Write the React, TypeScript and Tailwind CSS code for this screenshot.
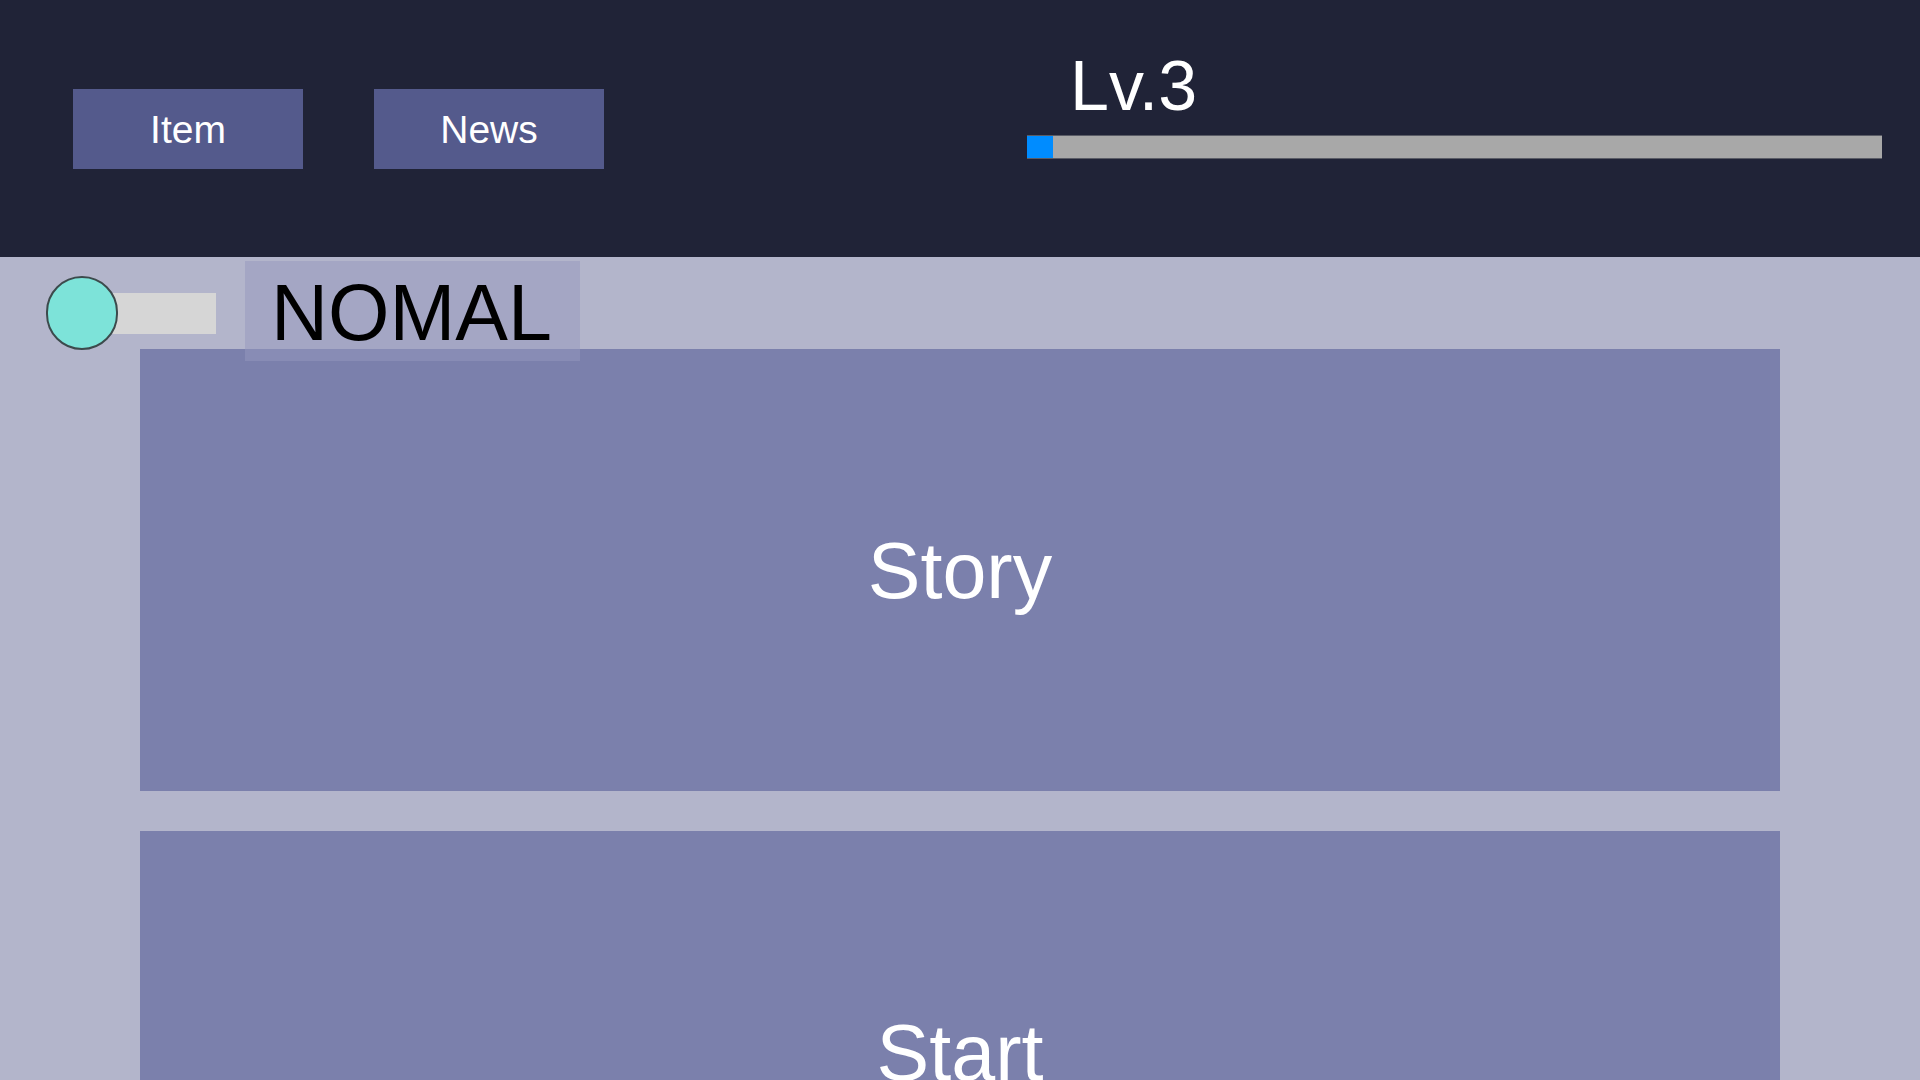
import React from "react";

export default function App() {
  return (
    <div
      className="w-[1920px] h-[1080px] overflow-hidden bg-[#b3b5cb]"
      style={{ fontFamily: '"Liberation Sans", Arial, sans-serif' }}
    >
      {/* Header */}
      <div className="h-[257px] bg-[#202337] flex items-start">
        <div className="flex gap-[71px] pl-[73px] pt-[89px]">
          <button className="w-[230px] h-[80px] bg-[#545a8c] text-white text-[39px] leading-none flex items-center justify-center">
            Item
          </button>
          <button className="w-[230px] h-[80px] bg-[#545a8c] text-white text-[39px] leading-none flex items-center justify-center">
            News
          </button>
        </div>
        <div className="ml-auto mr-[38px] w-[855px] pt-[51px] flex flex-col">
          <div className="pl-[43px] text-white text-[70px] leading-none h-[70px]">Lv.3</div>
          <div className="mt-[14px] h-[24px] bg-[#a8a8a8] border-y border-[#5a5c66] flex">
            <div className="w-[26px] h-full bg-[#008cff]" />
          </div>
        </div>
      </div>

      {/* Mode row */}
      <div className="flex items-start pl-[46px] pt-[4px]">
        <div className="flex items-center mt-[15px]">
          <div className="relative z-10 w-[72px] h-[74px] rounded-full bg-[#7de3d9] border-2 border-[#3c4a4c]" />
          <div className="-ml-[8px] w-[106px] h-[41px] bg-[#d6d6d6]" />
        </div>
        <div className="relative z-10 ml-[29px] w-[335px] h-[100px] bg-[#9598be]/50 pl-[26px] pt-[12px]">
          <span className="block text-black text-[79px] leading-none">NOMAL</span>
        </div>
      </div>

      {/* Panels */}
      <div className="-mt-[12px] mx-[140px] flex flex-col gap-[40px]">
        <button className="h-[442px] w-full bg-[#7b80ac] text-white text-[79px] leading-none flex items-center justify-center">
          Story
        </button>
        <button className="h-[442px] w-full bg-[#7b80ac] text-white text-[79px] leading-none flex items-center justify-center">
          Start
        </button>
      </div>
    </div>
  );
}
